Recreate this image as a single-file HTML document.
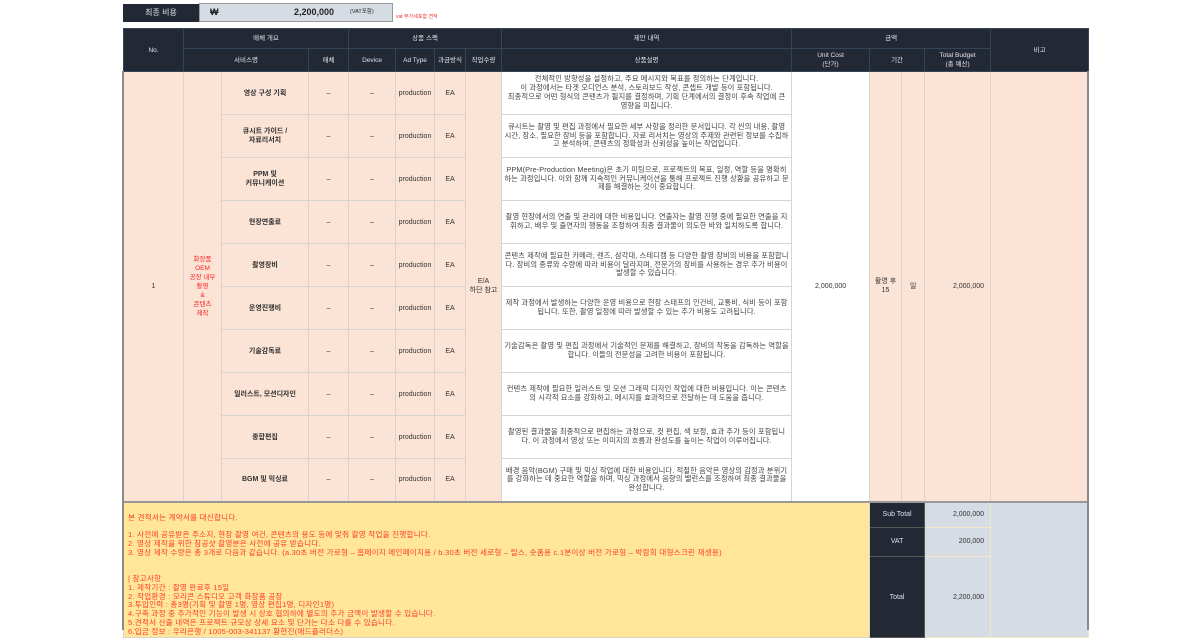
<!DOCTYPE html>
<html><head><meta charset="utf-8"><style>
*{margin:0;padding:0;box-sizing:border-box}
body{width:1200px;height:630px;background:#fff;position:relative;overflow:hidden;font-family:"Liberation Sans","Noto Sans CJK KR",sans-serif;color:#333}
.ab{position:absolute}
table{border-collapse:collapse;table-layout:fixed;position:absolute;left:123px;top:28px;width:965px}
td{border:1px solid #d9d4cf;font-size:7px;text-align:center;vertical-align:middle;overflow:hidden;line-height:9px}
tr.h td{background:#222834;color:#dfe3ea;border-color:#34455a;font-size:6.5px}
tr.b{height:43px}
.p{background:#fbe3d6}
.w{background:#fff}
.d{font-size:7.3px;line-height:8.8px;color:#444;padding:0 2px;letter-spacing:0.1px}
.s{font-weight:bold;color:#333;font-size:7px}
.y{background:#ffe699;text-align:left;vertical-align:top;color:#ff3b2f;font-size:7.6px;line-height:8.8px;padding:11px 4px 0;letter-spacing:0.2px;white-space:nowrap}
.k{background:#222834;color:#dfe3ea;border-color:#555}
.g{background:#d6dce4;border-color:#f2e8c8}
</style></head><body>
<div class="ab" style="left:123px;top:4px;width:76px;height:18px;background:#222834;color:#dfe3ea;font-size:8px;line-height:18px;text-align:center">최종 비용</div>
<div class="ab" style="left:199px;top:3px;width:194px;height:19px;background:#d6dce4;border:1px solid #999;font-size:9px;line-height:17px;font-weight:bold;color:#222"><span style="position:absolute;left:10px">₩</span><span style="position:absolute;left:94px">2,200,000</span><span style="position:absolute;left:150px;font-size:5.5px;font-weight:normal">(VAT포함)</span></div>
<div class="ab" style="left:396px;top:13px;font-size:5px;color:#e33">vat 부가세포함 견적</div>
<table>
<colgroup><col style="width:60px"><col style="width:38px"><col style="width:87px"><col style="width:40px"><col style="width:47px"><col style="width:39px"><col style="width:31px"><col style="width:36px"><col style="width:290px"><col style="width:78px"><col style="width:32px"><col style="width:23px"><col style="width:66px"><col style="width:98px"></colgroup>
<tr class="h" style="height:20px"><td rowspan="2">No.</td><td colspan="3">매체 개요</td><td colspan="4">상품 스펙</td><td>제안 내역</td><td colspan="4">금액</td><td rowspan="2">비고</td></tr>
<tr class="h" style="height:23px"><td colspan="2">서비스명</td><td>매체</td><td>Device</td><td>Ad Type</td><td>과금방식</td><td>작업수량</td><td>상품설명</td><td>Unit Cost<br>(단가)</td><td colspan="2">기간</td><td>Total Budget<br>(총 예산)</td></tr>
<tr class="b"><td class="p" rowspan="10">1</td><td class="p" rowspan="10" style="color:#f22;font-size:6.5px">화장품<br>OEM<br>공장 내부<br>촬영<br>&amp;<br>콘텐츠<br>제작</td><td class="p s">영상 구성 기획</td><td class="p">–</td><td class="p">–</td><td class="p">production</td><td class="p">EA</td><td class="p" rowspan="10">E/A<br>하단 참고</td><td class="w d">전체적인 방향성을 설정하고, 주요 메시지와 목표를 정의하는 단계입니다.<br>이 과정에서는 타겟 오디언스 분석, 스토리보드 작성, 콘셉트 개발 등이 포함됩니다.<br>최종적으로 어떤 형식의 콘텐츠가 될지를 결정하며, 기획 단계에서의 결정이 후속 작업에 큰 영향을 미칩니다.</td><td class="w" rowspan="10">2,000,000</td><td class="p" rowspan="10">촬영 후<br>15</td><td class="p" rowspan="10">일</td><td class="p" rowspan="10" style="text-align:right;padding-right:6px">2,000,000</td><td class="p" rowspan="10"></td></tr>
<tr class="b"><td class="p s">큐시트 가이드 /<br>자료리서치</td><td class="p">–</td><td class="p">–</td><td class="p">production</td><td class="p">EA</td><td class="w d">큐시트는 촬영 및 편집 과정에서 필요한 세부 사항을 정리한 문서입니다. 각 씬의 내용, 촬영 시간, 장소, 필요한 장비 등을 포함합니다. 자료 리서치는 영상의 주제와 관련된 정보를 수집하고 분석하여, 콘텐츠의 정확성과 신뢰성을 높이는 작업입니다.</td></tr>
<tr class="b"><td class="p s">PPM 및<br>커뮤니케이션</td><td class="p">–</td><td class="p">–</td><td class="p">production</td><td class="p">EA</td><td class="w d">PPM(Pre-Production Meeting)은 초기 미팅으로, 프로젝트의 목표, 일정, 역할 등을 명확히 하는 과정입니다. 이와 함께 지속적인 커뮤니케이션을 통해 프로젝트 진행 상황을 공유하고 문제를 해결하는 것이 중요합니다.</td></tr>
<tr class="b"><td class="p s">현장연출료</td><td class="p">–</td><td class="p">–</td><td class="p">production</td><td class="p">EA</td><td class="w d">촬영 현장에서의 연출 및 관리에 대한 비용입니다. 연출자는 촬영 진행 중에 필요한 연출을 지휘하고, 배우 및 출연자의 행동을 조정하여 최종 결과물이 의도한 바와 일치하도록 합니다.</td></tr>
<tr class="b"><td class="p s">촬영장비</td><td class="p">–</td><td class="p">–</td><td class="p">production</td><td class="p">EA</td><td class="w d">콘텐츠 제작에 필요한 카메라, 렌즈, 삼각대, 스테디캠 등 다양한 촬영 장비의 비용을 포함합니다. 장비의 종류와 수량에 따라 비용이 달라지며, 전문가의 장비를 사용하는 경우 추가 비용이 발생할 수 있습니다.</td></tr>
<tr class="b"><td class="p s">운영진행비</td><td class="p">–</td><td class="p">–</td><td class="p">production</td><td class="p">EA</td><td class="w d">제작 과정에서 발생하는 다양한 운영 비용으로 현장 스태프의 인건비, 교통비, 식비 등이 포함됩니다. 또한, 촬영 일정에 따라 발생할 수 있는 추가 비용도 고려됩니다.</td></tr>
<tr class="b"><td class="p s">기술감독료</td><td class="p">–</td><td class="p">–</td><td class="p">production</td><td class="p">EA</td><td class="w d">기술감독은 촬영 및 편집 과정에서 기술적인 문제를 해결하고, 장비의 작동을 감독하는 역할을 합니다. 이들의 전문성을 고려한 비용이 포함됩니다.</td></tr>
<tr class="b"><td class="p s">일러스트, 모션디자인</td><td class="p">–</td><td class="p">–</td><td class="p">production</td><td class="p">EA</td><td class="w d">컨텐츠 제작에 필요한 일러스트 및 모션 그래픽 디자인 작업에 대한 비용입니다. 이는 콘텐츠의 시각적 요소를 강화하고, 메시지를 효과적으로 전달하는 데 도움을 줍니다.</td></tr>
<tr class="b"><td class="p s">종합편집</td><td class="p">–</td><td class="p">–</td><td class="p">production</td><td class="p">EA</td><td class="w d">촬영된 결과물을 최종적으로 편집하는 과정으로, 컷 편집, 색 보정, 효과 추가 등이 포함됩니다. 이 과정에서 영상 또는 이미지의 흐름과 완성도를 높이는 작업이 이루어집니다.</td></tr>
<tr class="b"><td class="p s">BGM 및 믹싱료</td><td class="p">–</td><td class="p">–</td><td class="p">production</td><td class="p">EA</td><td class="w d">배경 음악(BGM) 구매 및 믹싱 작업에 대한 비용입니다. 적절한 음악은 영상의 감정과 분위기를 강화하는 데 중요한 역할을 하며, 믹싱 과정에서 음향의 밸런스를 조정하여 최종 결과물을 완성합니다.</td></tr>
<tr style="height:26px"><td class="y" colspan="10" rowspan="3" style="border-top:2px solid #999">본 견적서는 계약서를 대신합니다.<br><br>1. 사전에 공유받은 주소지, 현장 촬영 여건, 콘텐츠의 용도 등에 맞춰 촬영 작업을 진행합니다.<br>2. 영상 제작을 위한 참공샷 촬영분은 사전에 공유 받습니다.<br>3. 영상 제작 수량은 총 3개로 다음과 같습니다. (a.30초 버전 가로형 – 홈페이지 메인페이지용 / b.30초 버전 세로형 – 릴스, 숏폼용 c.1분이상 버전 가로형 – 박람회 대형스크린 재생용)<br><br><br>| 참고사항<br>1. 제작기간 : 촬영 완료후 15일<br>2. 작업환경 : 모리콘 스튜디오 고객 화장품 공장<br>3.투입인력 : 총3명(기획 및 촬영 1명, 영상 편집1명, 디자인1명)<br>4.구축 과정 중 추가적인 기능이 발생 시 상호 협의하에 별도의 추가 금액이 발생할 수 있습니다.<br>5.견적서 산출 내역은 프로젝트 규모상 상세 요소 및 단가는 다소 다를 수 있습니다.<br>6.입금 정보 : 우리은행 / 1005-003-341137 황현진(애드플러더스)</td><td class="k" colspan="2" style="border-top:2px solid #999">Sub Total</td><td class="g" style="text-align:right;padding-right:6px;border-top:2px solid #999">2,000,000</td><td class="g" rowspan="3" style="border-top:2px solid #999"></td></tr>
<tr style="height:28px"><td class="k" colspan="2">VAT</td><td class="g" style="text-align:right;padding-right:6px">200,000</td></tr>
<tr style="height:80px"><td class="k" colspan="2" style="vertical-align:top;padding-top:36px">Total</td><td class="g" style="text-align:right;padding-right:6px;vertical-align:top;padding-top:36px">2,200,000</td></tr>
</table>
<div class="ab" style="left:122px;top:71px;width:2px;height:559px;background:#8a8a8a"></div>
<div class="ab" style="left:1087px;top:71px;width:2px;height:559px;background:#8a8a8a"></div>
</body></html>
